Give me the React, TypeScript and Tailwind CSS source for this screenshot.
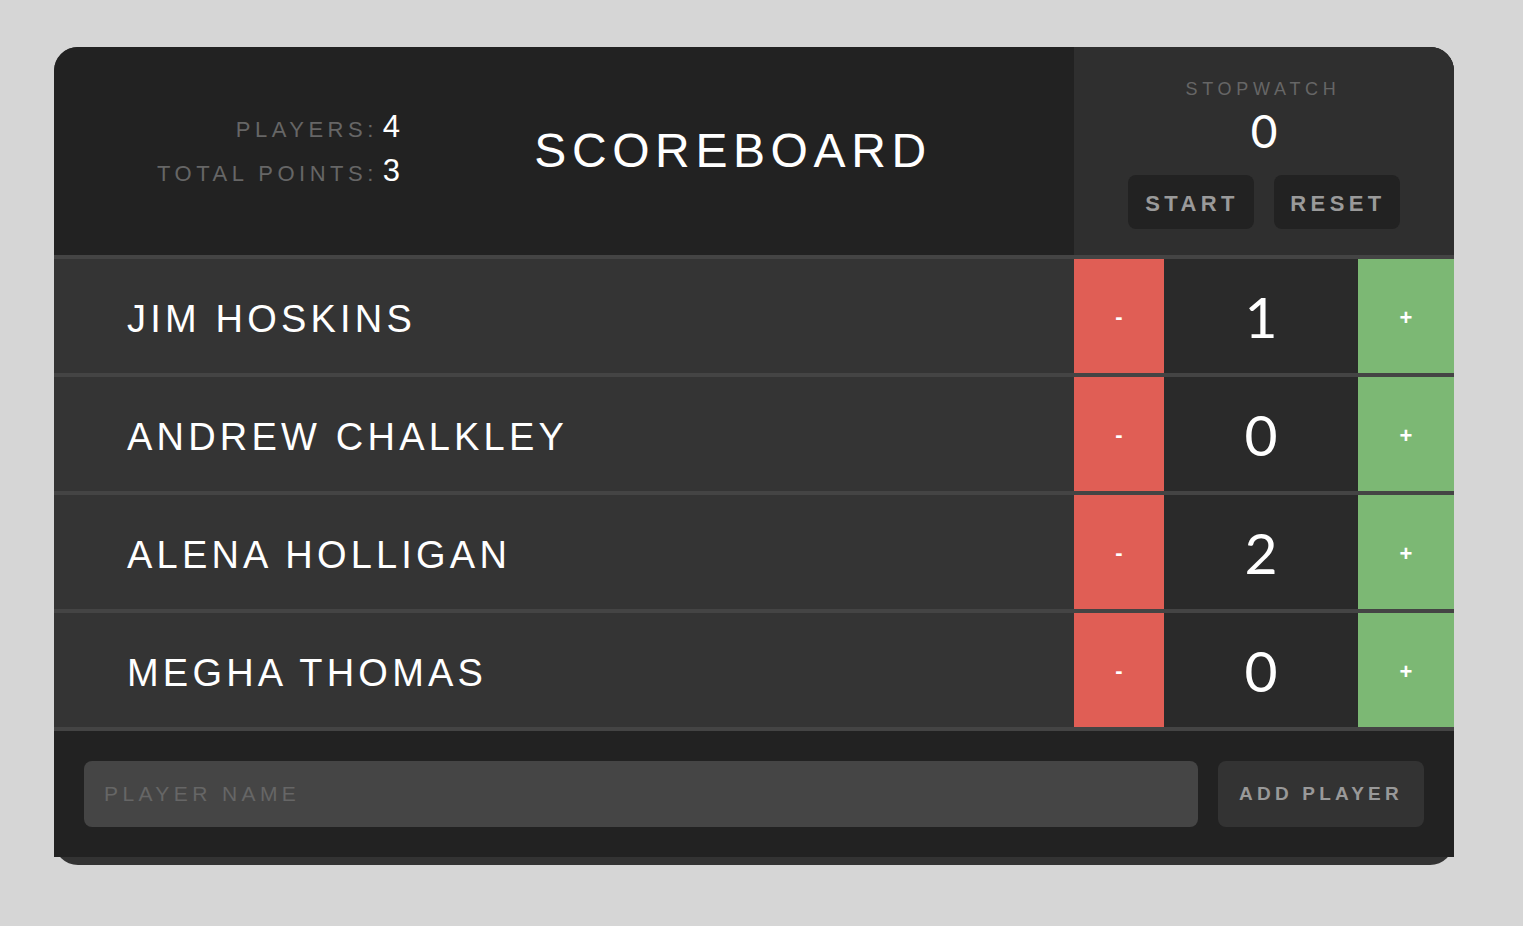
import { useState } from "react";

type Player = {
  id: number;
  name: string;
  score: number;
};

const initialPlayers: Player[] = [
  { id: 1, name: "Jim Hoskins", score: 1 },
  { id: 2, name: "Andrew Chalkley", score: 0 },
  { id: 3, name: "Alena Holligan", score: 2 },
  { id: 4, name: "Megha Thomas", score: 0 },
];

const sans = "font-['Liberation_Sans',Arial,sans-serif]";
const lato = "font-['Lato','Liberation_Sans',sans-serif]";

const Stats = ({ players }: { players: Player[] }) => {
  const total = players.reduce((sum, p) => sum + p.score, 0);

  return (
    <div className="w-[346px] shrink-0 flex flex-col items-end mb-[6px]">
      <div className="flex items-baseline h-[44px]">
        <span className="text-[22px] tracking-[4.5px] text-[#666]">PLAYERS:</span>
        <span className="ml-[5px] text-[31px] text-white">{players.length}</span>
      </div>
      <div className="flex items-baseline h-[44px]">
        <span className="text-[22px] tracking-[4.5px] text-[#666]">TOTAL POINTS:</span>
        <span className="ml-[5px] text-[31px] text-white">{total}</span>
      </div>
    </div>
  );
};

const Stopwatch = () => {
  const [elapsed] = useState(0);

  return (
    <div className="w-[380px] shrink-0 bg-[#2f2f2f] flex flex-col items-center pt-[31px]">
      <div className="text-[18px] leading-[22px] tracking-[4.7px] text-[#666] pr-[2px]">
        STOPWATCH
      </div>
      <div className={`${lato} mt-[8px] text-[46px] leading-none text-white`}>
        {elapsed}
      </div>
      <div className="mt-[21px] flex gap-[20px]">
        <button className="w-[126px] h-[54px] rounded-[8px] bg-[#222] text-[22px] font-bold tracking-[4.4px] text-[#9a9a9a] pl-[2px] pt-[3px]">
          START
        </button>
        <button className="w-[126px] h-[54px] rounded-[8px] bg-[#222] text-[22px] font-bold tracking-[4.4px] text-[#9a9a9a] pl-[2px] pt-[3px]">
          RESET
        </button>
      </div>
    </div>
  );
};

const PlayerRow = ({
  player,
  onChange,
}: {
  player: Player;
  onChange: (delta: number) => void;
}) => (
  <div className="flex h-[118px] border-b-4 border-[#444]">
    <div className="flex-1 bg-[#343434] flex items-center pl-[73px] pt-[6px]">
      <span className="text-[38px] leading-none tracking-[4.2px] text-white uppercase">
        {player.name}
      </span>
    </div>
    <button
      onClick={() => onChange(-1)}
      className="w-[90px] bg-[#e05e55] text-white text-[22px] font-bold flex items-center justify-center"
    >
      -
    </button>
    <div
      className={`${lato} w-[194px] bg-[#2a2a2a] text-white text-[57px] leading-none flex items-center justify-center`}
    >
      {player.score}
    </div>
    <button
      onClick={() => onChange(1)}
      className="w-[96px] bg-[#7cb874] text-white text-[22px] font-bold flex items-center justify-center pt-[3px]"
    >
      +
    </button>
  </div>
);

const App = () => {
  const [players, setPlayers] = useState(initialPlayers);
  const [name, setName] = useState("");

  const changeScore = (id: number, delta: number) =>
    setPlayers((prev) =>
      prev.map((p) => (p.id === id ? { ...p, score: Math.max(0, p.score + delta) } : p))
    );

  const addPlayer = () => {
    if (!name.trim()) return;
    setPlayers((prev) => [...prev, { id: Date.now(), name: name.trim(), score: 0 }]);
    setName("");
  };

  return (
    <div className={`${sans} min-h-screen bg-[#d6d6d6] pt-[47px] pl-[54px]`}>
      <div className="w-[1400px] rounded-[24px] bg-[#333] pb-[8px]">
        {/* header */}
        <div className="flex h-[212px] rounded-t-[24px] overflow-hidden border-b-4 border-[#444] bg-[#222]">
          <div className="flex-1 flex items-center">
            <Stats players={players} />
            <h1 className="flex-1 text-center pr-[8px] text-[48px] leading-none tracking-[5.6px] text-white">
              SCOREBOARD
            </h1>
          </div>
          <Stopwatch />
        </div>

        {players.map((player) => (
          <PlayerRow
            key={player.id}
            player={player}
            onChange={(delta) => changeScore(player.id, delta)}
          />
        ))}

        {/* add player form */}
        <form
          onSubmit={(e) => {
            e.preventDefault();
            addPlayer();
          }}
          className="flex gap-[20px] p-[30px] bg-[#222]"
        >
          <input
            value={name}
            onChange={(e) => setName(e.target.value)}
            placeholder="PLAYER NAME"
            className="flex-1 h-[66px] rounded-[8px] bg-[#454545] px-[20px] text-[21px] tracking-[4.4px] text-white placeholder:text-[#666] outline-none"
          />
          <button
            type="submit"
            className="w-[206px] h-[66px] rounded-[8px] bg-[#333] text-[19px] font-bold tracking-[4.2px] text-[#999]"
          >
            ADD PLAYER
          </button>
        </form>
      </div>
    </div>
  );
};

export default App;
